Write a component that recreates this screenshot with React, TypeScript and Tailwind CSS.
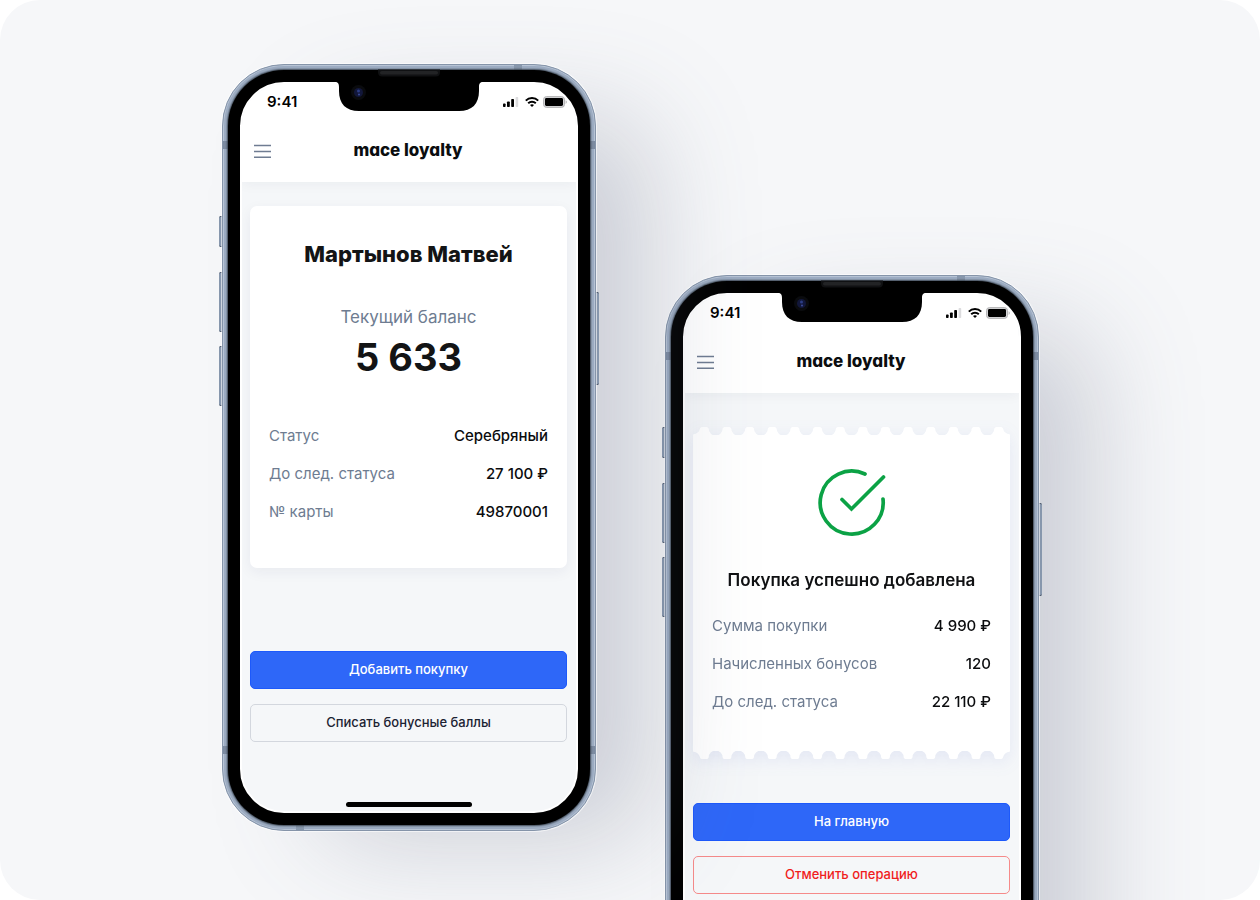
import type { ReactNode } from 'react';

type Row = { label: string; value: string };

const customerRows: Row[] = [
  { label: 'Статус', value: 'Серебряный' },
  { label: 'До след. статуса', value: '27 100 ₽' },
  { label: '№ карты', value: '49870001' },
];

const purchaseRows: Row[] = [
  { label: 'Сумма покупки', value: '4 990 ₽' },
  { label: 'Начисленных бонусов', value: '120' },
  { label: 'До след. статуса', value: '22 110 ₽' },
];

const TEETH = 14;
const TICKET_WIDTH = 316;

// scalloped strip, round bites are cut out of the top side
function ticketEdgePath() {
  const pitch = TICKET_WIDTH / TEETH;
  const r = 7;
  let d = `M0 8 V7.5 Q6 6.5 ${r} 1.5 Q7.5 0 9 0`;
  for (let i = 1; i < TEETH; i++) {
    const c = i * pitch;
    d += ` H${c - 9} Q${c - 7.5} 0 ${c - r} 1.5 A${r} ${r} 0 0 0 ${c + r} 1.5 Q${c + 7.5} 0 ${c + 9} 0`;
  }
  d += ` H${TICKET_WIDTH - 9} Q${TICKET_WIDTH - 7.5} 0 ${TICKET_WIDTH - r} 1.5 Q${TICKET_WIDTH - 6} 6.5 ${TICKET_WIDTH} 7.5 V8 Z`;
  return d;
}

function TicketEdge({ className = '' }: { className?: string }) {
  return (
    <svg
      className={`block h-2 w-full ${className}`}
      viewBox={`0 0 ${TICKET_WIDTH} 8`}
      preserveAspectRatio="none"
      aria-hidden="true"
    >
      <path d={ticketEdgePath()} fill="#fff" />
    </svg>
  );
}

function Notch() {
  return (
    <svg
      className="absolute top-0 left-1/2 h-[47px] w-[148px] -translate-x-1/2"
      viewBox="0 0 148 47"
      aria-hidden="true"
    >
      <path
        d="M0 15 V17 C3 17 4 18.5 4 22 V26 C4 39 11 46 24 46 H124 C137 46 144 39 144 26 V22 C144 18.5 145 17 148 17 V15 Z"
        fill="#000"
      />
      <path d="M43 4.5 H105 V7 Q105 11.5 100.5 11.5 H47.5 Q43 11.5 43 7 Z" fill="#101113" />
      <rect x="45" y="6" width="58" height="3.5" rx="1.7" fill="#222325" />
      <circle cx="23.5" cy="27.5" r="7.5" fill="#0a0b0e" />
      <circle cx="23.5" cy="27.5" r="4.5" fill="#12173a" />
      <circle cx="23.5" cy="26" r="1.5" fill="#2c3d85" />
      <circle cx="24" cy="29.5" r="1" fill="#3d4c9c" />
    </svg>
  );
}

function StatusIcons() {
  return (
    <svg className="h-3 w-[64px]" viewBox="0 0 64 12" aria-hidden="true">
      <rect x="0" y="7.5" width="2.6" height="3.5" rx="0.8" fill="#000" />
      <rect x="4" y="5.4" width="2.8" height="5.6" rx="0.8" fill="#000" />
      <rect x="8.2" y="3" width="2.8" height="8" rx="0.8" fill="#000" />
      <rect x="12.6" y="1" width="2.6" height="10" rx="0.8" fill="#dcdcde" />
      <g fill="none" stroke="#000" strokeWidth="2">
        <path d="M22.8 4.6 C26.2 1.2 31.8 1.2 35.2 4.6" />
        <path d="M25.2 7.2 C27.3 5.2 30.7 5.2 32.8 7.2" />
      </g>
      <path d="M27 9 C28.1 8 29.9 8 31 9 L29 11 Z" fill="#000" />
      <rect x="40.5" y="0.6" width="21" height="10.8" rx="3" fill="#d4d4d6" stroke="#b4b4b6" />
      <rect x="42" y="2.1" width="18" height="7.8" rx="1.4" fill="#000" />
      <path d="M62.6 4.2 C64.2 5 64.2 7.2 62.6 8 Z" fill="#b4b4b6" />
    </svg>
  );
}

function Phone({ className = '', children }: { className?: string; children: ReactNode }) {
  return (
    <section
      className={`relative aspect-[374/767] w-[374px] shrink-0 rounded-[62px] shadow-[76px_32px_110px_-24px_rgba(88,96,122,0.28)] ${className}`}
    >
      <span className="absolute top-[152px] -left-[3px] h-[31px] w-1 rounded-l-xs border-y border-[#3f4d61] bg-[#8797ad]" />
      <span className="absolute top-[208px] -left-[3px] h-[60px] w-1 rounded-l-xs border-y border-[#3f4d61] bg-[#8797ad]" />
      <span className="absolute top-[282px] -left-[3px] h-[60px] w-1 rounded-l-xs border-y border-[#3f4d61] bg-[#8797ad]" />
      <span className="absolute top-[228px] -right-[3px] h-[93px] w-1 rounded-r-xs border-y border-[#3f4d61] bg-[#8797ad]" />
      <div className="relative h-full rounded-[62px] border border-[#8594a9] bg-[#a3b3c9] p-[5px] shadow-[0_0_0_1px_rgba(255,255,255,0.6),inset_0_0_0_1px_#b7c4d5,inset_0_0_2px_2px_#9aa9bf]">
        <span className="absolute top-0 right-[73px] h-[5px] w-2 bg-[#8797ac]" />
        <span className="absolute bottom-0 left-[73px] h-[5px] w-2 bg-[#8797ac]" />
        <span className="absolute inset-x-0 top-[76px] h-2 bg-[#7c8ba1]" />
        <span className="absolute inset-x-0 bottom-[76px] h-2 bg-[#7c8ba1]" />
        <div className="relative h-full rounded-[56px] bg-black p-3 shadow-[0_0_2px_1px_#39434f]">
          <div className="relative flex h-full flex-col overflow-hidden rounded-[44px] border-2 border-white bg-[#f5f7f9]">
            <header className="bg-white shadow-[0_2px_12px_rgba(20,30,60,0.05)]">
              <div className="flex h-9 items-center justify-between pr-[9px] pl-[25px]">
                <time className="text-[15px] font-semibold text-black">9:41</time>
                <StatusIcons />
              </div>
              <div className="grid h-[62px] grid-cols-[1fr_auto_1fr] items-center pr-[14px] pl-3">
                <button type="button" aria-label="Меню" className="w-[17px]">
                  <svg viewBox="0 0 17 14" className="block h-[14px] w-[17px]" aria-hidden="true">
                    <path d="M0 1.5 H17 M0 7.5 H17 M0 13.3 H17" stroke="#6f7c92" strokeWidth="1.5" />
                  </svg>
                </button>
                <span className="text-[17px] font-extrabold text-[#0b0d0f] [font-feature-settings:'cv11']">
                  mace loyalty
                </span>
              </div>
            </header>
            <main className="flex grow flex-col pr-[9px] pl-2">{children}</main>
            <div className="absolute bottom-1 left-1/2 h-[5px] w-[126px] -translate-x-1/2 rounded-full bg-black" />
          </div>
        </div>
        <Notch />
      </div>
    </section>
  );
}

function Details({ rows }: { rows: Row[] }) {
  return (
    <dl>
      {rows.map((row) => (
        <div key={row.label} className="flex h-[38px] items-center justify-between text-[15px]">
          <dt className="text-[#6e7c91]">{row.label}</dt>
          <dd className="font-medium text-[#0b0c0e]">{row.value}</dd>
        </div>
      ))}
    </dl>
  );
}

function Button({ className, children }: { className: string; children: ReactNode }) {
  return (
    <button
      type="button"
      className={`h-[38px] w-full rounded-[5px] border text-[13px] font-medium ${className}`}
    >
      {children}
    </button>
  );
}

function CustomerScreen() {
  return (
    <>
      <div className="mt-6 rounded-[7px] bg-white px-[19px] pt-8 pb-[37px] shadow-[0_4px_14px_rgba(30,40,80,0.06)]">
        <h1 className="text-center text-[22px] leading-8 font-extrabold text-[#131415]">
          Мартынов Матвей
        </h1>
        <p className="mt-[35px] text-center text-[17px] leading-6 text-[#6e7c91]">Текущий баланс</p>
        <p className="mt-2 mb-10 text-center text-[38px] leading-10 font-bold text-[#131415]">5 633</p>
        <Details rows={customerRows} />
      </div>
      <div className="mt-[83px] flex flex-col gap-[15px]">
        <Button className="border-[#1d59fb] bg-[#2e67f8] text-white">Добавить покупку</Button>
        <Button className="border-[#d3d7de] text-[#1b2333]">Списать бонусные баллы</Button>
      </div>
    </>
  );
}

function PurchaseScreen() {
  return (
    <>
      <div className="mt-[34px] drop-shadow-[0_5px_8px_rgba(70,90,200,0.09)]">
        <TicketEdge />
        <div className="flex flex-col bg-white px-[19px] pt-[34px] pb-[30px]">
          <svg
            className="size-[68px] self-center"
            viewBox="0 0 68 68"
            fill="none"
            stroke="#0ba245"
            strokeWidth="3.7"
            strokeLinecap="round"
            aria-hidden="true"
          >
            <path d="M47 5 A31.5 31.5 0 1 0 65 30" />
            <path d="M24 30.5 L33.5 40 L65.5 8" />
          </svg>
          <h2 className="mt-[31px] mb-[15px] text-center text-[17px] leading-6 font-semibold text-[#101113]">
            Покупка успешно добавлена
          </h2>
          <Details rows={purchaseRows} />
        </div>
        <TicketEdge className="rotate-180" />
      </div>
      <div className="mt-11 flex flex-col gap-[15px]">
        <Button className="border-[#1d59fb] bg-[#2e67f8] text-white">На главную</Button>
        <Button className="border-[#f58a8a] text-[#f01d1d]">Отменить операцию</Button>
      </div>
    </>
  );
}

export default function App() {
  return (
    <div className="h-screen bg-white font-['Inter',sans-serif]">
      <div className="flex h-full items-start justify-center gap-[69px] overflow-hidden rounded-[40px] bg-[#f6f7f9] pl-px">
        <Phone className="z-10 mt-16">
          <CustomerScreen />
        </Phone>
        <Phone className="mt-[275px]">
          <PurchaseScreen />
        </Phone>
      </div>
    </div>
  );
}
